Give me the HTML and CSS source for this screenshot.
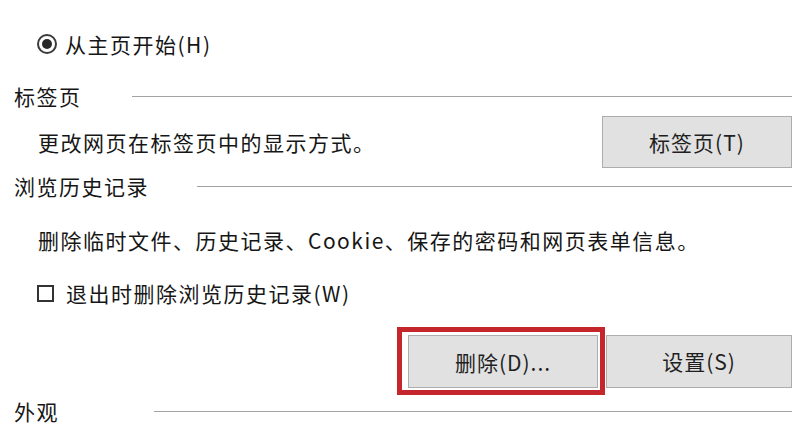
FILE: index.html
```html
<!DOCTYPE html>
<html lang="zh-CN">
<head>
<meta charset="utf-8">
<title>Internet 选项</title>
<link rel="stylesheet" href="styles.css">
</head>
<body>
<div class="panel">

  <div class="row radio-row">
    <span class="radio"><span class="radio-dot"></span></span>
    <span class="label">从主页开始(H)</span>
  </div>

  <div class="group-title title-tabs">
    <span>标签页</span>
    <span class="rule rule-tabs"></span>
  </div>

  <div class="row tab-row">
    <span class="desc">更改网页在标签页中的显示方式。</span>
    <button type="button" class="btn btn-tabs">标签页(T)</button>
  </div>

  <div class="group-title title-history">
    <span>浏览历史记录</span>
    <span class="rule rule-history"></span>
  </div>

  <div class="row desc-row">
    <span class="desc">删除临时文件、历史记录、Cookie、保存的密码和网页表单信息。</span>
  </div>

  <div class="row check-row">
    <span class="checkbox"></span>
    <span class="label">退出时删除浏览历史记录(W)</span>
  </div>

  <div class="button-row">
    <div class="highlight">
      <button type="button" class="btn btn-delete">删除(D)...</button>
    </div>
    <button type="button" class="btn btn-settings">设置(S)</button>
  </div>

  <div class="group-title title-look">
    <span>外观</span>
    <span class="rule rule-look"></span>
  </div>

</div>
</body>
</html>
```

FILE: styles.css
```css
* {
  box-sizing: border-box;
}

body {
  margin: 0;
  background: #ffffff;
  color: #161616;
  font-family: "Noto Sans CJK SC", "Noto Sans", sans-serif;
  font-size: 21px;
  line-height: 24px;
  letter-spacing: 1.5px;
  overflow: hidden;
}

.panel {
  width: 800px;
  height: 423px;
  overflow: hidden;
  padding: 0 8px 0 14px;
}

.row {
  display: flex;
  align-items: center;
}

/* radio */
.radio-row {
  height: 24px;
  margin-top: 32px;
  padding-left: 23px;
}
.radio {
  flex-shrink: 0;
  width: 20px;
  height: 20px;
  border: 2px solid #3a3a3a;
  border-radius: 50%;
  display: flex;
  align-items: center;
  justify-content: center;
  margin-right: 8px;
}
.radio-dot {
  width: 10px;
  height: 10px;
  border-radius: 50%;
  background: #2a2a2a;
}

/* group headings */
.group-title {
  display: flex;
  align-items: center;
  height: 24px;
}
.rule {
  flex: 1;
  border-top: 1px solid #a3a3a3;
}
.title-tabs {
  margin-top: 28px;
}
.rule-tabs {
  margin-left: 50px;
}
.title-history {
  margin-top: 6px;
}
.rule-history {
  margin-left: 48px;
}
.title-look {
  margin-top: 4px;
}
.rule-look {
  margin-left: 95px;
}

/* rows */
.tab-row {
  height: 52px;
  margin-top: 8px;
  padding-left: 24px;
  justify-content: space-between;
}
.desc-row {
  height: 24px;
  margin-top: 30px;
  padding-left: 24px;
}
.check-row {
  height: 24px;
  margin-top: 29px;
  padding-left: 23px;
}
.checkbox {
  flex-shrink: 0;
  width: 17px;
  height: 17px;
  border: 2px solid #333333;
  margin-right: 12px;
}

/* buttons */
.btn {
  font-family: inherit;
  font-size: 21px;
  letter-spacing: 1px;
  color: #1f1f1f;
  background: #e1e1e1;
  border: 1px solid #adadad;
  border-radius: 0;
  height: 53px;
  width: 190px;
  padding: 0;
}
.btn-tabs {
  height: 52px;
}

.button-row {
  display: flex;
  align-items: center;
  margin-top: 22px;
  padding-left: 383px;
}
.highlight {
  border: 5px solid #c4262c;
  padding: 3px 2px 2px 6px;
}
.btn-settings {
  width: 187px;
  margin-left: 1px;
}
```
